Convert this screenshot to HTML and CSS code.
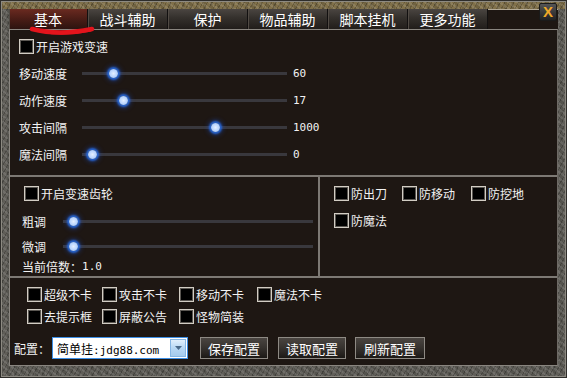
FILE: index.html
```html
<!DOCTYPE html>
<html>
<head>
<meta charset="utf-8">
<link rel="stylesheet" href="styles.css">
</head>
<body>
<div class="window">
  <div class="tabs">
    <div class="tab active">基本</div>
    <div class="tab">战斗辅助</div>
    <div class="tab">保护</div>
    <div class="tab">物品辅助</div>
    <div class="tab">脚本挂机</div>
    <div class="tab">更多功能</div>
    <div class="tab-fill"></div>
  </div>
  <div class="content">
    <section class="sec1">
      <div class="row"><label class="cb"><span class="box"></span>开启游戏变速</label></div>
      <div class="row srow"><span class="slabel">移动速度</span><div class="track w205"><span class="thumb" style="left:31px"></span></div><span class="val">60</span></div>
      <div class="row srow"><span class="slabel">动作速度</span><div class="track w205"><span class="thumb" style="left:41px"></span></div><span class="val">17</span></div>
      <div class="row srow"><span class="slabel">攻击间隔</span><div class="track w205"><span class="thumb" style="left:133px"></span></div><span class="val">1000</span></div>
      <div class="row srow"><span class="slabel">魔法间隔</span><div class="track w205"><span class="thumb" style="left:10px"></span></div><span class="val">0</span></div>
    </section>
    <div class="sec2">
      <div class="sec2l">
        <label class="cb r1"><span class="box"></span>开启变速齿轮</label>
        <div class="srow2 r2"><span class="slabel2">粗调</span><div class="track w250"><span class="thumb" style="left:10px"></span></div></div>
        <div class="srow2 r3"><span class="slabel2">微调</span><div class="track w250"><span class="thumb" style="left:10px"></span></div></div>
        <div class="ratio r4">当前倍数：<span class="mono">1.0</span></div>
      </div>
      <div class="sec2r">
        <label class="cb"><span class="box"></span>防出刀</label>
        <label class="cb"><span class="box"></span>防移动</label>
        <label class="cb"><span class="box"></span>防挖地</label>
        <label class="cb"><span class="box"></span>防魔法</label>
      </div>
    </div>
    <div class="sec3">
      <div class="opts">
        <label class="cb"><span class="box"></span>超级不卡</label>
        <label class="cb"><span class="box"></span>攻击不卡</label>
        <label class="cb"><span class="box"></span>移动不卡</label>
        <label class="cb"><span class="box"></span>魔法不卡</label>
        <label class="cb"><span class="box"></span>去提示框</label>
        <label class="cb"><span class="box"></span>屏蔽公告</label>
        <label class="cb"><span class="box"></span>怪物简装</label>
      </div>
      <div class="cfg">
        <span class="cfg-label">配置：</span>
        <div class="combo"><span class="combo-text">简单挂<span class="mono">:jdg88.com</span></span><span class="combo-btn"><svg width="7" height="4" viewBox="0 0 7 4"><path d="M0 0H7L3.5 4Z" fill="#4a6a8a"/></svg></span></div>
        <div class="btn b1">保存配置</div>
        <div class="btn b2">读取配置</div>
        <div class="btn b3">刷新配置</div>
      </div>
    </div>
  </div>
  <svg class="swoosh" width="66" height="12" viewBox="0 0 66 12"><path d="M3 4 Q 30 11 63 4" fill="none" stroke="#e3141c" stroke-width="4.5" stroke-linecap="round"/><path d="M22 7.5 Q 42 9 61 5" fill="none" stroke="#e3141c" stroke-width="3.5" stroke-linecap="round"/></svg>
  <div class="close">X</div>
</div>
</body>
</html>
```

FILE: styles.css
```css
html, body {
  margin: 0;
  padding: 0;
  background: #3a3936;
}
.window {
  position: relative;
  width: 567px;
  height: 378px;
  box-sizing: border-box;
  padding: 9px 9px 12px 9px;
  display: flex;
  flex-direction: column;
  font-family: "Noto Sans CJK SC", "Liberation Sans", sans-serif;
  font-size: 12px;
  color: #f2f2f2;
  background-color: #5d5b56;
  background-image:
    repeating-linear-gradient(37deg, rgba(255,255,255,.10) 0 2px, transparent 2px 5px),
    repeating-linear-gradient(-61deg, rgba(0,0,0,.22) 0 1px, transparent 1px 4px),
    repeating-linear-gradient(90deg, rgba(0,0,0,.12) 0 3px, transparent 3px 7px),
    linear-gradient(to bottom, #807049 0 9px, #605e58 9px);
  box-shadow: inset 0 0 0 1px #2e2d2a, inset 0 0 0 2px #8d8a82;
}
.tabs {
  height: 20px;
  display: flex;
  flex: none;
}
.tab {
  width: 79px;
  height: 20px;
  box-sizing: border-box;
  display: flex;
  align-items: center;
  justify-content: center;
  font-size: 14px;
  line-height: 1;
  color: #fff;
  background: linear-gradient(to bottom, #4a4541 0%, #34302c 45%, #211d1a 100%);
  border-right: 1px solid #121010;
  box-shadow: inset 1px 0 0 #514b45;
}
.tab + .tab { width: 80px; }
.tab.active {
  background: linear-gradient(to bottom, #6a2a20 0%, #4a1d16 50%, #2c1410 100%);
}
.tab-fill {
  flex: 1;
  background: #1e1713;
  border-top: 1px solid #b4ab98;
}
.content {
  flex: 1;
  display: flex;
  flex-direction: column;
  background: #1e1713;
  border: 1px solid #8a8680;
  border-right-color: #6e6a65;
}
.sec1 {
  height: 147px;
  box-sizing: border-box;
  padding: 3px 0 0 9px;
  border-bottom: 2px solid #7d7974;
}
.row {
  height: 27px;
  display: flex;
  align-items: center;
}
.cb {
  display: flex;
  align-items: center;
  gap: 2px;
  height: 16px;
  white-space: nowrap;
}
.box {
  width: 15px;
  height: 15px;
  box-sizing: border-box;
  background: #000;
  border: 1px solid #d2cdc4;
  box-shadow: inset 0 0 0 1px #5b5752;
  flex: none;
}
.slabel {
  width: 63px;
  flex: none;
}
.track {
  position: relative;
  height: 3px;
  background: #39383d;
  flex: none;
}
.w205 { width: 205px; }
.w250 { width: 250px; }
.thumb {
  position: absolute;
  top: 50%;
  width: 9px;
  height: 9px;
  margin: -4.5px 0 0 -4.5px;
  border-radius: 50%;
  background: radial-gradient(circle, #e4efff 0%, #b8d4ff 55%, #5f9bf0 100%);
  box-shadow: 0 0 2px 2px rgba(40, 110, 230, .85), 0 0 5px 3px rgba(30, 80, 200, .45);
}
.val {
  margin-left: 6px;
  font-family: "DejaVu Sans Mono", "Liberation Mono", monospace;
  font-size: 11px;
}
.mono {
  font-family: "DejaVu Sans Mono", "Liberation Mono", monospace;
  font-size: 11px;
}
.sec2 {
  height: 99px;
  display: flex;
  border-bottom: 2px solid #7d7974;
}
.sec2l {
  box-sizing: content-box;
  width: 296px;
  padding: 8px 0 0 12px;
  border-right: 2px solid #7d7974;
  display: flex;
  flex-direction: column;
  flex: none;
}
.sec2l .r1 { margin-left: 2px; }
.srow2 {
  height: 16px;
  display: flex;
  align-items: center;
}
.r2 { margin-top: 12px; }
.r3 { margin-top: 9px; }
.r4 { margin-top: 4px; height: 16px; display: flex; align-items: center; }
.slabel2 {
  width: 41px;
  flex: none;
}
.sec2r {
  flex: 1;
  padding: 8px 0 0 14px;
  display: grid;
  grid-template-columns: 68px 69px auto;
  grid-auto-rows: 16px;
  row-gap: 11px;
  align-content: start;
}
.sec3 {
  flex: 1;
  display: flex;
  flex-direction: column;
}
.opts {
  padding: 8px 0 0 17px;
  display: grid;
  grid-template-columns: 75px 77px 78px auto;
  grid-auto-rows: 16px;
  row-gap: 6px;
}
.cfg {
  margin-top: 13px;
  padding-left: 4px;
  display: flex;
  align-items: center;
  height: 22px;
}
.cfg-label {
  width: 38px;
  flex: none;
}
.combo {
  width: 136px;
  height: 22px;
  box-sizing: border-box;
  background: #fff;
  border: 1px solid #3d8fe6;
  display: flex;
  align-items: center;
  color: #000;
  flex: none;
}
.combo-text {
  flex: 1;
  padding-left: 4px;
  white-space: nowrap;
}
.combo-btn {
  width: 16px;
  height: 18px;
  margin-right: 1px;
  box-sizing: border-box;
  border: 1px solid #86b6e4;
  background: linear-gradient(to bottom, #e2f0fc, #b8d8f4 50%, #a5cbed);
  display: flex;
  align-items: center;
  justify-content: center;
}
.btn {
  height: 22px;
  box-sizing: border-box;
  border: 1px solid #8e8a84;
  background: linear-gradient(to bottom, #4a4541 0%, #36322e 50%, #1c1916 100%);
  display: flex;
  align-items: center;
  justify-content: center;
  color: #fff;
  font-size: 13px;
  flex: none;
}
.b1 { width: 68px; margin-left: 12px; }
.b2 { width: 68px; margin-left: 10px; }
.b3 { width: 70px; margin-left: 9px; }
.swoosh {
  position: absolute;
  left: 29px;
  top: 25px;
}
.close {
  position: absolute;
  left: 539px;
  top: 3px;
  width: 18px;
  height: 18px;
  box-sizing: border-box;
  border: 1px solid #1a1a1a;
  border-radius: 2px;
  background: linear-gradient(to bottom, #555 0%, #3a3a3a 50%, #222 100%);
  color: #f0a928;
  font-family: "Liberation Sans", sans-serif;
  font-weight: bold;
  font-size: 15px;
  line-height: 16px;
  text-align: center;
}
```
